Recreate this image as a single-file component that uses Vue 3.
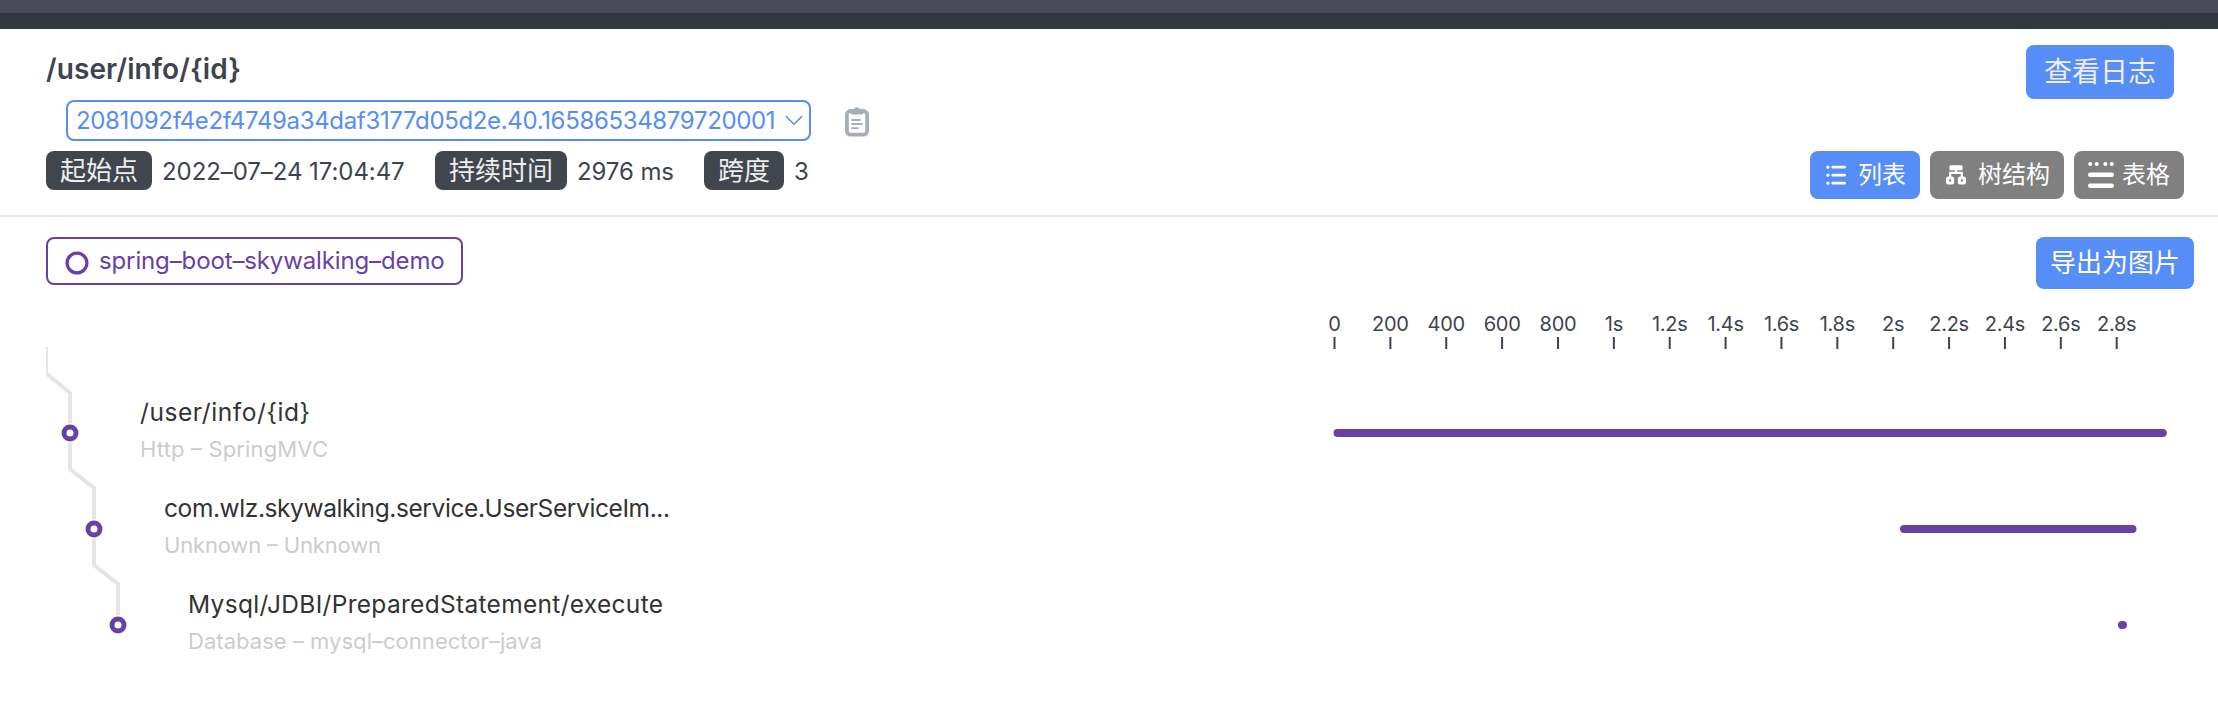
<script setup>
const meta = [
  { label: '起始点', value: '2022–07–24 17:04:47', cls: 'date' },
  { label: '持续时间', value: '2976 ms', cls: 'duration' },
  { label: '跨度', value: '3', cls: 'count' },
]

const axisStart = 1334.5
const step = 55.87
const ticks = ['0', '200', '400', '600', '800', '1s', '1.2s', '1.4s', '1.6s', '1.8s', '2s', '2.2s', '2.4s', '2.6s', '2.8s']

const spans = [
  { x: 70, y: 433, title: '/user/info/{id}', titleW: 170, sub: 'Http – SpringMVC', subW: 188, barX: 1333.5, barW: 833.3 },
  { x: 94, y: 529, title: 'com.wlz.skywalking.service.UserServiceIm...', titleW: 506, sub: 'Unknown – Unknown', subW: 217, barX: 1900, barW: 236.5 },
  { x: 118, y: 625, title: 'Mysql/JDBI/PreparedStatement/execute', titleW: 475, sub: 'Database – mysql–connector–java', subW: 354, barX: 2118, barW: 9 },
]
</script>

<template>
  <div class="page">
    <div class="topbar"></div>
    <header class="head">
      <div class="info">
        <h1 class="title">/user/info/{id}</h1>
        <div class="trace-row">
          <div class="select">
            <span class="trace-id">2081092f4e2f4749a34daf3177d05d2e.40.16586534879720001</span>
            <svg class="chevron" width="18" height="11" viewBox="0 0 18 11">
              <path d="M1 1.2 9 9.2 17 1.2" fill="none" stroke="#578df7" stroke-width="1.6" />
            </svg>
          </div>
          <svg class="clipboard" width="24" height="30" viewBox="0 0 24 30">
            <rect x="1.9" y="4" width="20.2" height="23.7" rx="3.6" fill="none" stroke="#a7aebb" stroke-width="3.8" />
            <path d="M5.5 2.5H8.5C9.5.9 10.6.2 12 .2s2.500.7 3.500 2.300H18.500V5.500a2 2 0 0 1-2 2h-9a2 2 0 0 1-2-2z" fill="#a7aebb" />
            <path d="M7 13h8M7 17h10M7 21.200h6" stroke="#a7aebb" stroke-width="1.800" stroke-linecap="round" />
          </svg>
        </div>
        <div class="meta">
          <div v-for="m in meta" :key="m.label" class="meta-item" :class="m.cls">
            <span class="tag">{{ m.label }}</span>
            <span class="value">{{ m.value }}</span>
          </div>
        </div>
      </div>
      <div class="actions">
        <button class="btn logs">查看日志</button>
        <div class="views">
          <button class="btn view active">
            <svg width="20" height="20" viewBox="0 0 20 20" fill="#fff" stroke="#fff">
              <path d="M6.800 2.200H18.600M6.800 10.200H18.600M6.800 18.200H18.600" stroke-width="2.800" stroke-linecap="round" />
              <g stroke="none">
                <circle cx="1.900" cy="2.200" r="1.600" />
                <circle cx="1.900" cy="10.200" r="1.600" />
                <circle cx="1.900" cy="18.200" r="1.600" />
              </g>
            </svg>
            <span>列表</span>
          </button>
          <button class="btn view tree">
            <svg width="20" height="20" viewBox="0 0 20 20" fill="none" stroke="#fff">
              <rect x="3.500" y="0.200" width="13" height="5" rx="0.600" fill="#fff" stroke="none" />
              <path d="M10 5v2.500M4.200 12.500V7.800H15.800V12.500" stroke-width="2.200" />
              <rect x="1.500" y="13" width="5.200" height="5" rx="1" stroke-width="3" />
              <rect x="13.300" y="13" width="5.200" height="5" rx="1" stroke-width="3" />
            </svg>
            <span>树结构</span>
          </button>
          <button class="btn view table">
            <svg width="26" height="26" viewBox="0 0 26 26" fill="#fff">
              <circle cx="2.200" cy="2" r="2" />
              <circle cx="8.700" cy="2" r="2" />
              <circle cx="17.300" cy="2" r="2" />
              <circle cx="23.800" cy="2" r="2" />
              <rect y="10.500" width="26" height="4.400" rx="2.200" />
              <rect y="21.500" width="26" height="4.400" rx="2.200" />
            </svg>
            <span>表格</span>
          </button>
        </div>
      </div>
    </header>

    <section class="legend">
      <div class="service">
        <svg width="24" height="24" viewBox="0 0 24 24">
          <circle cx="12" cy="12" r="9.900" fill="none" stroke="#6941a6" stroke-width="3.200" />
        </svg>
        <span>spring–boot–skywalking–demo</span>
      </div>
      <button class="btn export">导出为图片</button>
    </section>

    <svg class="chart" width="2218" height="408" viewBox="0 300 2218 408">
      <g class="axis">
        <g v-for="(t, i) in ticks" :key="t" :transform="`translate(${axisStart + i * step} 0)`">
          <text y="331" text-anchor="middle">{{ t }}</text>
          <path d="M0 337v12" stroke="#3d444f" stroke-width="2" />
        </g>
      </g>
      <path d="M47 347V374" stroke="#e5e5e5" stroke-width="2" fill="none" />
      <path
        d="M47 374 70 393V469L94 488V565L118 584V625"
        stroke="#e5e5e5"
        stroke-width="4"
        fill="none"
      />
      <g v-for="s in spans" :key="s.y">
        <circle :cx="s.x" :cy="s.y" r="10" fill="#fff" />
        <circle :cx="s.x" :cy="s.y" r="6" fill="#fff" stroke="#6941a6" stroke-width="5" />
        <text class="span-title" :x="s.x + 70" :y="s.y - 12" :textLength="s.titleW">{{ s.title }}</text>
        <text class="span-sub" :x="s.x + 70" :y="s.y + 24" :textLength="s.subW">{{ s.sub }}</text>
        <rect :x="s.barX" :y="s.y - 4" :width="s.barW" height="8" rx="4" fill="#6941a6" />
      </g>
    </svg>
  </div>
</template>

<style>
body {
  background: #fff;
}
</style>

<style scoped>
.page {
  width: 2218px;
  height: 708px;
  overflow: hidden;
  background: #fff;
  color: #3d444f;
  font-family: Inter, "Noto Sans CJK SC", sans-serif;
  font-size: 24px;
}
.topbar {
  height: 29px;
  box-sizing: border-box;
  border-top: 13px solid #484b55;
  background: linear-gradient(#30343c, #333840 5px);
}
.head {
  height: 188px;
  box-sizing: border-box;
  padding: 16px 34px 0 46px;
  border-bottom: 2px solid #e5e5e5;
  display: flex;
  justify-content: space-between;
}
.title {
  margin: 0;
  height: 55px;
  line-height: 48px;
  font-size: 28px;
  font-weight: 600;
  letter-spacing: 0.1px;
}
.trace-row {
  display: flex;
  height: 51px;
}
.select {
  width: 745px;
  height: 41px;
  margin-left: 20px;
  box-sizing: border-box;
  border: 2px solid #578df7;
  border-radius: 8px;
  display: flex;
  align-items: center;
  justify-content: space-between;
  padding: 0 6px 0 8px;
  color: #578df7;
}
.trace-id {
  letter-spacing: -0.34px;
  white-space: nowrap;
}
.clipboard {
  margin: 7px 0 0 34px;
}
.meta {
  display: flex;
  height: 39px;
}
.meta-item {
  display: flex;
  align-items: center;
  white-space: nowrap;
}
.tag {
  height: 39px;
  line-height: 39px;
  padding: 0 14px;
  border-radius: 8px;
  background: #40454e;
  color: #eee;
  font-size: 26px;
  margin-right: 10px;
}
.value {
  margin-top: 2px;
}
.date {
  width: 389px;
}
.duration {
  width: 269px;
}
.date .value {
  letter-spacing: -0.07px;
}
.duration .value {
  letter-spacing: -0.1px;
}
.actions {
  display: flex;
  flex-direction: column;
  align-items: flex-end;
}
.btn {
  border: 0;
  border-radius: 8px;
  background: #578df7;
  color: #fff;
  font-family: inherit;
  padding: 0;
  display: flex;
  align-items: center;
  justify-content: center;
  line-height: 1;
}
.logs {
  width: 148px;
  height: 54px;
  margin-right: 10px;
  font-size: 28px;
  color: #eee;
}
.views {
  display: flex;
  gap: 10px;
  margin-top: 52px;
}
.view {
  height: 48px;
  width: 110px;
  font-size: 24px;
  gap: 12px;
  padding-left: 2px;
  background: #808080;
}
.view.active {
  background: #578df7;
}
.view.tree {
  width: 134px;
}
.view.table {
  gap: 8px;
  padding-left: 0;
}
.legend {
  display: flex;
  justify-content: space-between;
  height: 83px;
  box-sizing: border-box;
  padding: 20px 24px 0 46px;
}
.service {
  width: 417px;
  height: 48px;
  box-sizing: border-box;
  border: 2px solid #6941a6;
  border-radius: 8px;
  color: #6941a6;
  display: flex;
  align-items: center;
  padding-left: 17px;
  gap: 10px;
  letter-spacing: -0.13px;
  white-space: nowrap;
}
.service svg {
  margin-top: 4px;
}
.service span {
  margin-top: -1px;
}
.export {
  width: 158px;
  height: 52px;
  font-size: 26px;
}
.chart {
  display: block;
}
.axis text {
  font-size: 20px;
  fill: #3d444f;
  letter-spacing: -0.3px;
}
.span-title {
  font-size: 24.5px;
  fill: #333;
}
.span-sub {
  font-size: 22px;
  fill: #ccc;
}
</style>
